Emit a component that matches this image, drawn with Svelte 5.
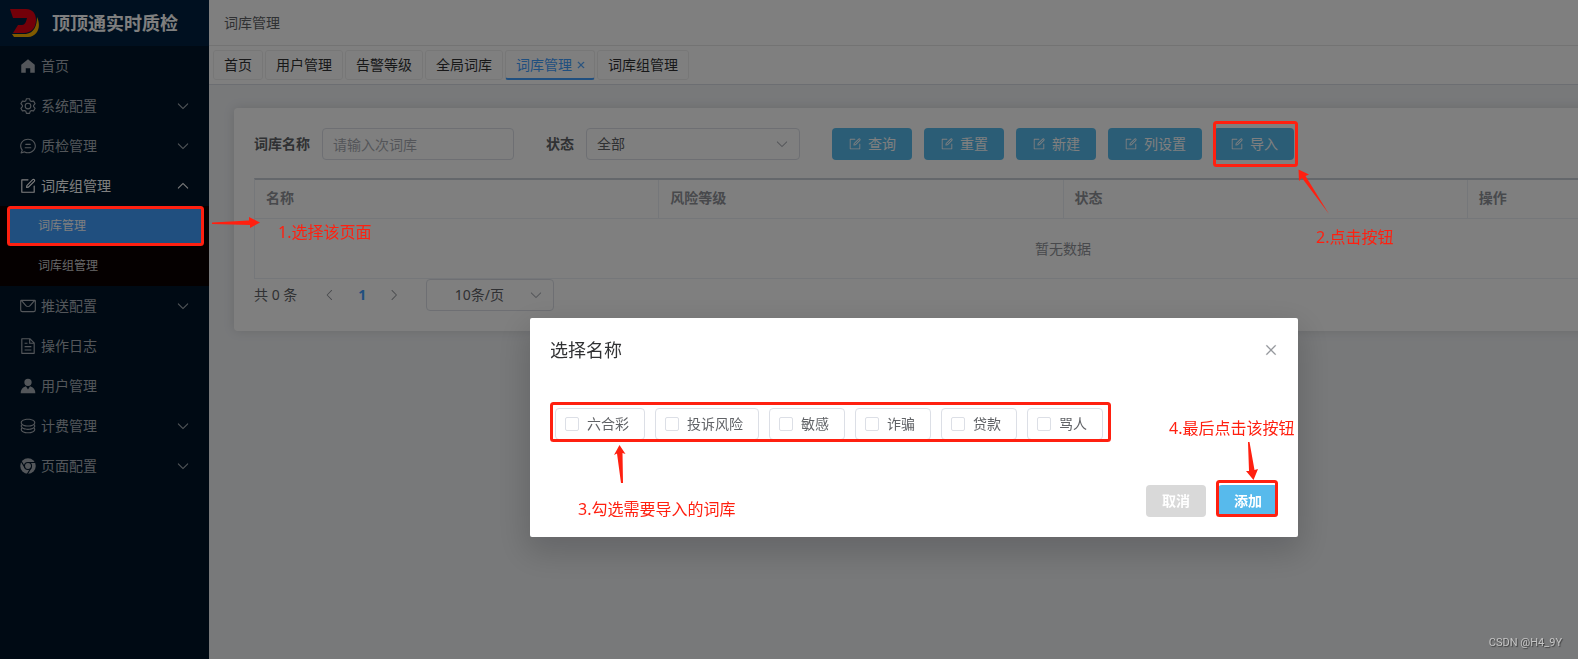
<script lang="ts">
  interface MenuItem {
    label: string;
    icon: string;
    open?: boolean;
    children?: string[];
  }

  const icons: Record<string, string> = {
    home: 'M512 128 128 447.936V896h255.936V640H640v256h255.936V447.936z',
    setting:
      'M600.704 64a32 32 0 0 1 30.464 22.208l35.2 109.376c14.784 7.232 28.928 15.36 42.432 24.512l112.384-24.192a32 32 0 0 1 34.432 15.36L944.32 364.8a32 32 0 0 1-4.032 37.504l-77.12 85.12a357.12 357.12 0 0 1 0 49.024l77.12 85.248a32 32 0 0 1 4.032 37.504l-88.704 153.6a32 32 0 0 1-34.432 15.296L708.8 803.904c-13.44 9.088-27.648 17.28-42.368 24.512l-35.264 109.376A32 32 0 0 1 600.704 960H423.296a32 32 0 0 1-30.464-22.208L357.696 828.48a351.616 351.616 0 0 1-42.56-24.64l-112.32 24.256a32 32 0 0 1-34.432-15.36L79.68 659.2a32 32 0 0 1 4.032-37.504l77.12-85.248a357.12 357.12 0 0 1 0-48.896l-77.12-85.248A32 32 0 0 1 79.68 364.8l88.704-153.6a32 32 0 0 1 34.432-15.296l112.32 24.256c13.568-9.152 27.776-17.408 42.56-24.64l35.2-109.312A32 32 0 0 1 423.232 64H600.64zm-23.424 64H446.72l-36.352 113.088-24.512 11.968a294.113 294.113 0 0 0-34.816 20.096l-22.656 15.36-116.224-25.088-65.28 113.152 79.68 88.192-1.92 27.136a293.12 293.12 0 0 0 0 40.192l1.92 27.136-79.808 88.192 65.344 113.152 116.224-25.024 22.656 15.296a294.113 294.113 0 0 0 34.816 20.096l24.512 11.968L446.72 896h130.688l36.48-113.152 24.448-11.904a288.282 288.282 0 0 0 34.752-20.096l22.592-15.296 116.288 25.024 65.28-113.152-79.744-88.192 1.92-27.136a293.12 293.12 0 0 0 0-40.256l-1.92-27.136 79.808-88.128-65.344-113.152-116.288 24.96-22.592-15.232a287.616 287.616 0 0 0-34.752-20.096l-24.448-11.904L577.344 128zM512 320a192 192 0 1 1 0 384 192 192 0 0 1 0-384zm0 64a128 128 0 1 0 0 256 128 128 0 0 0 0-256z',
    chat: 'm174.72 855.68 135.296-45.12 23.68 11.84C388.096 849.536 448.576 864 512 864c211.84 0 384-166.784 384-352S723.84 160 512 160 128 326.784 128 512c0 69.12 24.96 139.264 70.848 199.232l22.08 28.8-46.272 115.584zm-45.248 82.56A32 32 0 0 1 89.6 896l58.368-145.92C94.72 680.32 64 596.864 64 512 64 299.904 256 96 512 96s448 203.904 448 416-192 416-448 416a461.056 461.056 0 0 1-206.912-48.384l-175.616 58.56zM352 576h320q32 0 32 32t-32 32H352q-32 0-32-32t32-32zm32-192h256q32 0 32 32t-32 32H384q-32 0-32-32t32-32z',
    edit: 'M832 512a32 32 0 1 1 64 0v352a32 32 0 0 1-32 32H160a32 32 0 0 1-32-32V160a32 32 0 0 1 32-32h352a32 32 0 0 1 0 64H192v640h640V512zM469.952 554.24l52.8-7.552L847.104 222.4a32 32 0 1 0-45.248-45.248L477.44 501.44l-7.552 52.8zm422.4-422.4a96 96 0 0 1 0 135.808l-331.84 331.84a32 32 0 0 1-18.112 9.088L436.8 623.68a32 32 0 0 1-36.224-36.224l15.104-105.6a32 32 0 0 1 9.024-18.112l331.904-331.84a96 96 0 0 1 135.744 0z',
    message:
      'M128 224v512a64 64 0 0 0 64 64h640a64 64 0 0 0 64-64V224H128zm0-64h768a64 64 0 0 1 64 64v512a128 128 0 0 1-128 128H192A128 128 0 0 1 64 736V224a64 64 0 0 1 64-64zM904 224 656.512 506.88a192 192 0 0 1-289.024 0L120 224h784zm-698.944 0 210.56 240.704a128 128 0 0 0 192.704 0L818.944 224H205.056z',
    document:
      'M832 384H576V128H192v768h640V384zm-26.496-64L640 154.496V320h165.504zM160 64h480l256 256v608a32 32 0 0 1-32 32H160a32 32 0 0 1-32-32V96a32 32 0 0 1 32-32zm160 448h384v64H320v-64zm0-192h160v64H320v-64zm0 384h384v64H320v-64z',
    avatar:
      'M628.736 528.896A416 416 0 0 1 928 928H96a415.872 415.872 0 0 1 299.264-399.104L512 704l116.736-175.104zM720 304a208 208 0 1 1-416 0 208 208 0 0 1 416 0z',
    coin: 'm161.92 580.736 29.888 58.88C171.328 659.776 160 681.728 160 704c0 82.304 155.328 160 352 160s352-77.696 352-160c0-22.272-11.392-44.16-31.808-64.32l30.464-58.432C903.936 615.808 928 657.664 928 704c0 129.728-188.544 224-416 224S96 833.728 96 704c0-46.592 24.32-88.576 65.92-123.264zM161.92 388.736l29.888 58.88C171.328 467.84 160 489.792 160 512c0 82.304 155.328 160 352 160s352-77.696 352-160c0-22.272-11.392-44.16-31.808-64.32l30.464-58.432C903.936 423.808 928 465.664 928 512c0 129.728-188.544 224-416 224S96 641.728 96 512c0-46.592 24.32-88.576 65.92-123.264zM512 544c-227.456 0-416-94.272-416-224S284.544 96 512 96s416 94.272 416 224-188.544 224-416 224zm0-64c196.672 0 352-77.696 352-160S708.672 160 512 160s-352 77.696-352 160 155.328 160 352 160z',
    down: 'M831.872 340.864 512 652.672 192.128 340.864a30.592 30.592 0 0 0-42.752 0 29.12 29.12 0 0 0 0 41.6L489.664 714.24a32 32 0 0 0 44.672 0l340.288-331.712a29.12 29.12 0 0 0 0-41.728 30.592 30.592 0 0 0-42.752 0z',
    up: 'M831.872 683.136 512 371.328 192.128 683.136a30.592 30.592 0 0 1-42.752 0 29.12 29.12 0 0 1 0-41.6L489.664 309.76a32 32 0 0 1 44.672 0l340.288 331.712a29.12 29.12 0 0 1 0 41.728 30.592 30.592 0 0 1-42.752 0z',
    left: 'M609.408 149.376 277.76 489.6a32 32 0 0 0 0 44.672l331.648 340.352a29.12 29.12 0 0 0 41.728 0 30.592 30.592 0 0 0 0-42.752L339.264 511.936l311.872-319.872a30.592 30.592 0 0 0 0-42.688 29.12 29.12 0 0 0-41.728 0z',
    right:
      'M340.864 149.312a30.592 30.592 0 0 0 0 42.752L652.736 512 340.864 831.872a30.592 30.592 0 0 0 0 42.752 29.12 29.12 0 0 0 41.728 0L714.24 534.336a32 32 0 0 0 0-44.672L382.592 149.376a29.12 29.12 0 0 0-41.728 0z',
    close:
      'M764.288 214.592 512 466.88 259.712 214.592a31.936 31.936 0 0 0-45.12 45.12L466.752 512 214.528 764.224a31.936 31.936 0 1 0 45.12 45.184L512 557.184l252.288 252.288a31.936 31.936 0 0 0 45.12-45.12L557.12 512.064l252.288-252.352a31.936 31.936 0 1 0-45.12-45.184z',
  };

  const menu: MenuItem[] = [
    { label: '首页', icon: 'home' },
    { label: '系统配置', icon: 'setting', children: [] },
    { label: '质检管理', icon: 'chat', children: [] },
    { label: '词库组管理', icon: 'edit', open: true, children: ['词库管理', '词库组管理'] },
    { label: '推送配置', icon: 'message', children: [] },
    { label: '操作日志', icon: 'document' },
    { label: '用户管理', icon: 'avatar' },
    { label: '计费管理', icon: 'coin', children: [] },
    { label: '页面配置', icon: 'chrome', children: [] },
  ];

  const tabs = ['首页', '用户管理', '告警等级', '全局词库', '词库管理', '词库组管理'];
  const actions = ['查询', '重置', '新建', '列设置', '导入'];
  const columns = ['名称', '风险等级', '状态', '操作'];
  const libraries = ['六合彩', '投诉风险', '敏感', '诈骗', '贷款', '骂人'];

  const current = '词库管理';
  let keyword = $state('');
  let selected = $state<string[]>([]);
</script>

{#snippet icon(name: string)}
  <svg class="icon" viewBox="0 0 1024 1024" aria-hidden="true">
    {#if name === 'chrome'}
      <circle cx="512" cy="512" r="440" fill="currentColor" />
      <g class="cut">
        <circle cx="512" cy="512" r="200" />
        <path d="M512 312H930M685 612 476 974M339 612 130 250" />
      </g>
      <circle cx="512" cy="512" r="112" fill="currentColor" />
    {:else}
      <path fill="currentColor" d={icons[name]} />
    {/if}
  </svg>
{/snippet}

<div class="layout">
  <aside class="sidebar">
    <div class="brand">
      <svg class="logo" viewBox="0 0 30 29" aria-hidden="true">
        <path fill="#ffb400" d="M27 8c4 8 2 19-9 20H4l-2-3h14c8-1 11-8 11-17z" />
        <path fill="#e60012" d="M0 0h16c7 0 10 5 10 11 0 8-5 13-12 13H3l5-8h4c3 0 4-3 5-7H3z" />
      </svg>
      <span>顶顶通实时质检</span>
    </div>
    <nav>
      {#each menu as item}
        <a class="item" class:open={item.open} href="#menu">
          {@render icon(item.icon)}
          <span class="label">{item.label}</span>
          {#if item.children}
            <span class="arrow">{@render icon(item.open ? 'up' : 'down')}</span>
          {/if}
        </a>
        {#if item.open}
          <div class="submenu">
            {#each item.children ?? [] as child}
              <a class="subitem" class:active={child === current} href="#menu">{child}</a>
            {/each}
          </div>
        {/if}
      {/each}
    </nav>
  </aside>

  <main>
    <header>{current}</header>
    <div class="tabs">
      {#each tabs as tab}
        <a class="tab" class:active={tab === current} href="#tab">
          {tab}
          {#if tab === current}<span class="tab-close">{@render icon('close')}</span>{/if}
        </a>
      {/each}
    </div>

    <section class="card">
      <form class="filters">
        <div class="field">
          <label for="keyword">词库名称</label>
          <input id="keyword" type="text" placeholder="请输入次词库" bind:value={keyword} />
        </div>
        <div class="field">
          <label for="status">状态</label>
          <div class="select">
            <select id="status"><option>全部</option></select>
            {@render icon('down')}
          </div>
        </div>
        <div class="actions">
          {#each actions as action}
            <button type="button">{@render icon('edit')}{action}</button>
          {/each}
        </div>
      </form>

      <table>
        <thead>
          <tr>
            {#each columns as column}<th>{column}</th>{/each}
          </tr>
        </thead>
        <tbody>
          <tr><td colspan={columns.length}>暂无数据</td></tr>
        </tbody>
      </table>

      <div class="pager">
        <span class="total">共 0 条</span>
        <button type="button" aria-label="上一页">{@render icon('left')}</button>
        <button type="button" class="page">1</button>
        <button type="button" aria-label="下一页">{@render icon('right')}</button>
        <div class="select size">
          <select aria-label="每页条数"><option>10条/页</option></select>
          {@render icon('down')}
        </div>
      </div>
    </section>
  </main>
</div>

<div class="mask">
  <div class="dialog" role="dialog" aria-labelledby="dialog-title">
    <div class="dialog-head">
      <span id="dialog-title">选择名称</span>
      <button type="button" class="close" aria-label="关闭">{@render icon('close')}</button>
    </div>
    <div class="choices">
      {#each libraries as name}
        <label class="choice">
          <input type="checkbox" value={name} bind:group={selected} />
          {name}
        </label>
      {/each}
    </div>
    <div class="dialog-foot">
      <button type="button" class="cancel">取消</button>
      <button type="button" class="confirm">添加</button>
    </div>
  </div>
</div>

<!-- step-by-step guide on top of everything -->
<div class="guide">
  <svg class="marks" aria-hidden="true">
    <g class="frames">
      <rect x="8.5" y="207.5" width="194" height="37" rx="2" />
      <rect x="1214.5" y="122.5" width="82" height="43" rx="2" />
      <rect x="551.5" y="403.5" width="558" height="37" rx="2" />
      <rect x="1217.5" y="481.5" width="59" height="34" rx="2" />
    </g>
    <g class="arrows">
      <path d="M212 222.500 249 220.500V217L260 222.500 250 228V225L212 224z" />
      <path d="M1298.500 169.500 1309 174.500 1305.500 176 1329 214 1302 178 1299 181z" />
      <path d="M619.500 445 625.500 454 622.500 453 623 483 621 483 617 453.500 614 455z" />
      <path d="M1248 442 1249.500 442 1254.500 470 1258 469 1253.500 480 1246 471 1249 471z" />
    </g>
  </svg>
  <span class="note step1">1.选择该页面</span>
  <span class="note step2">2.点击按钮</span>
  <span class="note step3">3.勾选需要导入的词库</span>
  <span class="note step4">4.最后点击该按钮</span>
</div>
<div class="watermark">CSDN @H4_9Y</div>

<style>
  :global(body) {
    overflow: hidden;
    font-family: 'Noto Sans', 'Noto Sans CJK SC', sans-serif;
    font-size: 14px;
    line-height: 20px;
    color: #606266;
    background: #f0f2f5;
  }
  button,
  input,
  select {
    font: inherit;
    color: inherit;
    box-sizing: border-box;
    margin: 0;
  }
  button {
    display: flex;
    align-items: center;
    justify-content: center;
    padding: 0;
    border: 0;
    background: none;
    cursor: pointer;
  }
  a {
    color: inherit;
    text-decoration: none;
  }
  .icon {
    width: 14px;
    height: 14px;
    flex: none;
    display: block;
  }

  .layout {
    display: flex;
    min-height: 100vh;
    overflow: hidden;
  }
  .sidebar {
    width: 209px;
    flex: none;
    background: #001529;
    color: #a6adb4;
  }
  .brand {
    display: flex;
    align-items: center;
    gap: 12px;
    height: 46px;
    padding-left: 10px;
    background: #002140;
    color: #fff;
    font-size: 18px;
    font-weight: 700;
  }
  .logo {
    width: 30px;
    height: 29px;
  }
  .item {
    display: flex;
    align-items: center;
    gap: 4px;
    height: 40px;
    padding: 0 19px;
  }
  .item.open {
    color: #fff;
  }
  .item > :global(.icon) {
    width: 18px;
    height: 18px;
  }
  .label {
    flex: 1;
  }
  .arrow {
    stroke: currentColor;
    stroke-width: 30px;
  }
  .cut {
    fill: none;
    stroke: #001529;
    stroke-width: 62px;
  }
  .submenu {
    background: #0a0000;
    font-size: 12px;
  }
  .subitem {
    display: flex;
    align-items: center;
    height: 34px;
    margin: 0 7px;
    padding: 3px 0 3px 31px;
    color: #cfcfcf;
  }
  .subitem.active {
    background: linear-gradient(#409eff, #409eff) center / 100% 34px no-repeat;
    color: #fff;
  }

  main {
    flex: 1;
    min-width: 0;
  }
  header {
    display: flex;
    align-items: center;
    height: 45px;
    padding: 0 15px;
    background: #fff;
    border-bottom: 1px solid #e6e6e6;
  }
  .tabs {
    display: flex;
    gap: 2px;
    padding: 4px;
    background: #fff;
    border-bottom: 1px solid #d8dce5;
  }
  .tab {
    display: flex;
    align-items: center;
    gap: 4px;
    height: 28px;
    padding: 0 10px;
    border: 1px solid #efefef;
    border-radius: 3px;
    color: #303133;
  }
  .tab.active {
    height: 27px;
    padding: 0 8px 0 10px;
    border-bottom: 2px solid #409eff;
    color: #409eff;
  }
  .tab-close > :global(.icon) {
    width: 10px;
    height: 10px;
    stroke: currentColor;
    stroke-width: 60px;
  }

  .card {
    min-width: 1618px;
    margin: 23px 25px;
    padding: 20px;
    border-radius: 4px;
    background: #fff;
    box-shadow: 0 0 12px rgba(0, 0, 0, 0.12);
  }
  .filters,
  .field,
  .actions {
    display: flex;
    align-items: center;
  }
  .filters {
    gap: 32px;
    margin-bottom: 18px;
  }
  .field,
  .actions {
    gap: 12px;
  }
  .field label {
    font-weight: 700;
  }
  .field input,
  .select select {
    height: 32px;
    padding: 0 10px;
    border: 1px solid #dcdfe6;
    border-radius: 4px;
    background: #fff;
  }
  .field input {
    width: 192px;
  }
  .field input::placeholder {
    color: #a8abb2;
  }
  .select {
    display: grid;
    align-items: center;
    width: 214px;
    color: #606266;
  }
  .select > select,
  .select > :global(.icon) {
    grid-area: 1 / 1;
  }
  .select > select {
    appearance: none;
    width: 100%;
  }
  .select > :global(.icon) {
    justify-self: end;
    margin-right: 11px;
    color: #a8abb2;
    stroke: currentColor;
    stroke-width: 20px;
    pointer-events: none;
  }
  .actions button {
    gap: 6px;
    height: 32px;
    padding: 0 16px;
    border-radius: 4px;
    background: #57baec;
    color: #fff;
  }

  table {
    width: 100%;
    table-layout: fixed;
    border-collapse: separate;
    border-spacing: 0;
    border-top: 2px solid #c8ced6;
    border-left: 1px solid #ebeef5;
  }
  th,
  td {
    box-sizing: border-box;
    padding: 0 11px;
    border-right: 1px solid #ebeef5;
    border-bottom: 1px solid #ebeef5;
  }
  th {
    height: 39px;
    padding-bottom: 2px;
    text-align: left;
    font-weight: 700;
    color: #909399;
  }
  td {
    height: 60px;
    text-align: center;
    color: #909399;
  }

  .pager {
    display: flex;
    align-items: center;
  }
  .total {
    margin-right: 17px;
  }
  .pager button {
    width: 32px;
    height: 32px;
  }
  .pager button > :global(.icon) {
    color: #909399;
  }
  .pager .page {
    color: #409eff;
    font-weight: 700;
  }
  .size {
    width: 128px;
    margin-left: 16px;
  }
  .size select {
    padding: 0 28px 0 6px;
    text-align: center;
    text-align-last: center;
  }

  .mask {
    position: fixed;
    inset: 0;
    background: rgba(0, 0, 0, 0.5);
  }
  .dialog {
    box-sizing: border-box;
    width: 768px;
    margin: 318px 0 0 530px;
    padding: 20px;
    border-radius: 2px;
    background: #fff;
    box-shadow: 0 12px 32px 4px rgba(0, 0, 0, 0.16);
  }
  .dialog-head {
    display: flex;
    align-items: center;
    justify-content: space-between;
    height: 23px;
    font-size: 18px;
    color: #303133;
  }
  .close {
    color: #909399;
  }
  .close > :global(.icon) {
    width: 16px;
    height: 16px;
    margin-right: -1px;
    stroke: currentColor;
    stroke-width: 20px;
  }
  .choices {
    display: flex;
    gap: 10px;
    padding: 47px 5px 45px;
  }
  .choice {
    display: flex;
    align-items: center;
    gap: 8px;
    box-sizing: border-box;
    height: 32px;
    padding: 0 15px 0 9px;
    border: 1px solid #dcdfe6;
    border-radius: 4px;
  }
  .choice input {
    appearance: none;
    width: 14px;
    height: 14px;
    border: 1px solid #dcdfe6;
    border-radius: 2px;
    background: #fff;
  }
  .choice input:checked {
    background: #409eff;
  }
  .dialog-foot {
    display: flex;
    justify-content: flex-end;
    gap: 12px;
  }
  .dialog-foot button {
    width: 60px;
    height: 32px;
    border-radius: 4px;
    color: #fff;
    font-weight: 700;
  }
  .dialog-foot .cancel {
    background: #d9d9d9;
  }
  .dialog-foot .confirm {
    background: #57baec;
  }

  .guide {
    position: fixed;
    inset: 0;
    pointer-events: none;
  }
  .marks {
    display: block;
    width: 100%;
    height: 100%;
  }
  .frames {
    fill: none;
    stroke: #ff2010;
    stroke-width: 3px;
  }
  .arrows {
    fill: #ff2010;
  }
  .note {
    position: absolute;
    font-size: 16px;
    color: #ff2010;
    white-space: nowrap;
  }
  .step1 {
    left: 278px;
    top: 222px;
  }
  .step2 {
    left: 1316px;
    top: 227px;
  }
  .step3 {
    left: 578px;
    top: 499px;
  }
  .step4 {
    left: 1169px;
    top: 418px;
  }
  .watermark {
    position: fixed;
    right: 16px;
    bottom: 8px;
    font: 11px/16px Roboto, 'Liberation Sans', sans-serif;
    color: #c4c4c4;
    text-shadow: 1px 1px 1px rgba(0, 0, 0, 0.5);
  }
</style>
